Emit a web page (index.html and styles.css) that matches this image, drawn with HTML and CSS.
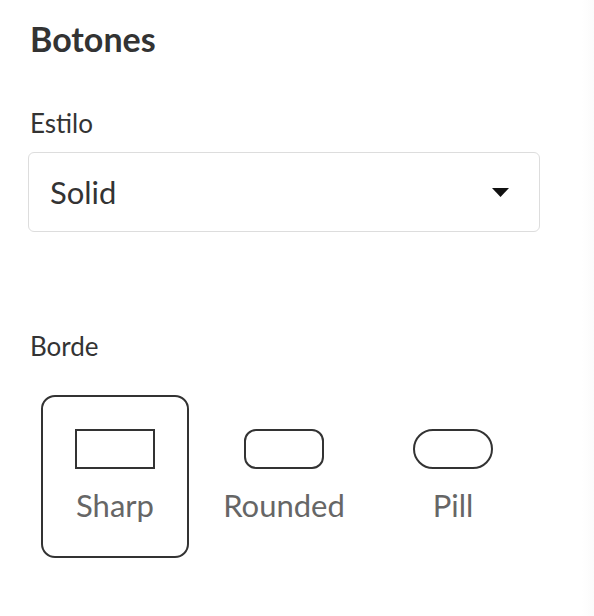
FILE: index.html
```html
<!DOCTYPE html>
<html lang="es">
<head>
<meta charset="utf-8">
<title>Botones</title>
<link rel="stylesheet" href="styles.css">
</head>
<body>
<div class="panel">
  <h1 class="title">Botones</h1>
  <div class="field-label">Estilo</div>
  <div class="select">
    <span class="select-value">Solid</span>
    <svg class="caret" width="17" height="9" viewBox="0 0 17 9"><path d="M0 0 H17 L8.5 9 Z" fill="#111"/></svg>
  </div>
  <div class="field-label field-label-gap">Borde</div>
  <div class="options">
    <div class="option option-selected">
      <svg class="shape" width="80" height="40" viewBox="0 0 80 40"><rect x="1" y="1" width="78" height="38" fill="none" stroke="#333" stroke-width="2"/></svg>
      <span class="option-label">Sharp</span>
    </div>
    <div class="option">
      <svg class="shape" width="80" height="40" viewBox="0 0 80 40"><rect x="1" y="1" width="78" height="38" rx="11" fill="none" stroke="#333" stroke-width="2"/></svg>
      <span class="option-label">Rounded</span>
    </div>
    <div class="option">
      <svg class="shape" width="80" height="40" viewBox="0 0 80 40"><rect x="1" y="1" width="78" height="38" rx="19" fill="none" stroke="#333" stroke-width="2"/></svg>
      <span class="option-label">Pill</span>
    </div>
  </div>
</div>
</body>
</html>
```
FILE: styles.css
```css
html, body {
  margin: 0;
  padding: 0;
}
body {
  width: 594px;
  height: 616px;
  background: linear-gradient(90deg, #ffffff 0, #ffffff 582px, #fbfbfb 594px);
  font-family: Lato, "Noto Sans", sans-serif;
  color: #333333;
}
.panel {
  padding: 19px 0 0 28px;
  width: 512px;
}
.title {
  margin: 0 0 0 2px;
  font-size: 34px;
  line-height: 40px;
  font-weight: 700;
  color: #333333;
}
.field-label {
  margin: 48px 0 13px 2px;
  font-size: 26px;
  line-height: 32px;
  color: #333333;
}
.field-label-gap {
  margin-top: 98px;
  margin-bottom: 33px;
}
.select {
  box-sizing: border-box;
  height: 80px;
  border: 1px solid #dddddd;
  border-radius: 6px;
  display: flex;
  align-items: center;
  justify-content: space-between;
  padding: 0 30px 0 21px;
}
.select-value {
  font-size: 31px;
  line-height: 36px;
  color: #333333;
}
.caret {
  display: block;
}
.options {
  display: flex;
  gap: 21px;
  margin-left: 13px;
}
.option {
  box-sizing: border-box;
  width: 148px;
  height: 163px;
  border: 2px solid transparent;
  border-radius: 14px;
  display: flex;
  flex-direction: column;
  align-items: center;
  padding-top: 32px;
}
.option-selected {
  border-color: #333333;
}
.shape {
  display: block;
}
.option-label {
  margin-top: 18px;
  font-size: 31px;
  line-height: 36px;
  color: #666666;
}
```
